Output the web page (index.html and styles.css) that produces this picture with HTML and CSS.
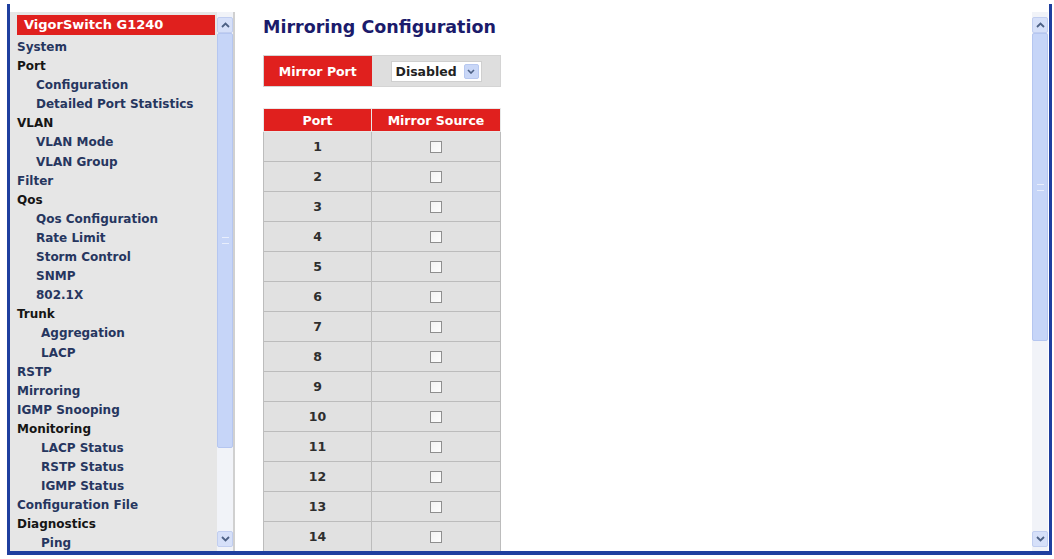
FILE: index.html
```html
<!DOCTYPE html>
<html lang="en">
<head>
    <meta charset="UTF-8">
    <title>Mirroring Configuration</title>
    <link rel="stylesheet" href="styles.css">
</head>
<body>
    <div class="window">
        <!-- left navigation frame -->
        <div class="menu-frame">
            <div class="menu">
                <div class="menu-title">VigorSwitch G1240</div>
                <ul class="menu-list">
                    <li class="link">System</li>
                    <li class="group">Port</li>
                    <li class="sub">Configuration</li>
                    <li class="sub">Detailed Port Statistics</li>
                    <li class="group">VLAN</li>
                    <li class="sub">VLAN Mode</li>
                    <li class="sub">VLAN Group</li>
                    <li class="link">Filter</li>
                    <li class="group">Qos</li>
                    <li class="sub">Qos Configuration</li>
                    <li class="sub">Rate Limit</li>
                    <li class="sub">Storm Control</li>
                    <li class="sub">SNMP</li>
                    <li class="sub">802.1X</li>
                    <li class="group">Trunk</li>
                    <li class="sub deep">Aggregation</li>
                    <li class="sub deep">LACP</li>
                    <li class="link">RSTP</li>
                    <li class="link">Mirroring</li>
                    <li class="link">IGMP Snooping</li>
                    <li class="group">Monitoring</li>
                    <li class="sub deep">LACP Status</li>
                    <li class="sub deep">RSTP Status</li>
                    <li class="sub deep">IGMP Status</li>
                    <li class="link">Configuration File</li>
                    <li class="group">Diagnostics</li>
                    <li class="sub deep">Ping</li>
                </ul>
            </div>
            <div class="scrollbar">
                <div class="arrow up"><svg width="9" height="6" viewBox="0 0 9 6"><path d="M1 5 L4.5 1.5 L8 5" fill="none" stroke="#4d6185" stroke-width="1.8"/></svg></div>
                <div class="thumb menu-thumb"><span class="grip"></span></div>
                <div class="track"></div>
                <div class="arrow down"><svg width="9" height="6" viewBox="0 0 9 6"><path d="M1 1 L4.5 4.5 L8 1" fill="none" stroke="#4d6185" stroke-width="1.8"/></svg></div>
            </div>
        </div>

        <!-- main page -->
        <div class="content">
            <h1>Mirroring Configuration</h1>

            <table class="mirror-port">
                <tr>
                    <th>Mirror Port</th>
                    <td>
                        <div class="select">
                            <span>Disabled</span>
                            <span class="select-btn"><svg width="8" height="5" viewBox="0 0 8 5"><path d="M1 1 L4 4 L7 1" fill="none" stroke="#4d6185" stroke-width="1.6"/></svg></span>
                        </div>
                    </td>
                </tr>
            </table>

            <table class="ports">
                <tr>
                    <th class="col-port">Port</th>
                    <th>Mirror Source</th>
                </tr>
                <tr><td>1</td><td><span class="checkbox"></span></td></tr>
                <tr><td>2</td><td><span class="checkbox"></span></td></tr>
                <tr><td>3</td><td><span class="checkbox"></span></td></tr>
                <tr><td>4</td><td><span class="checkbox"></span></td></tr>
                <tr><td>5</td><td><span class="checkbox"></span></td></tr>
                <tr><td>6</td><td><span class="checkbox"></span></td></tr>
                <tr><td>7</td><td><span class="checkbox"></span></td></tr>
                <tr><td>8</td><td><span class="checkbox"></span></td></tr>
                <tr><td>9</td><td><span class="checkbox"></span></td></tr>
                <tr><td>10</td><td><span class="checkbox"></span></td></tr>
                <tr><td>11</td><td><span class="checkbox"></span></td></tr>
                <tr><td>12</td><td><span class="checkbox"></span></td></tr>
                <tr><td>13</td><td><span class="checkbox"></span></td></tr>
                <tr><td>14</td><td><span class="checkbox"></span></td></tr>
            </table>
        </div>

        <div class="scrollbar main-scroll">
            <div class="arrow up"><svg width="9" height="6" viewBox="0 0 9 6"><path d="M1 5 L4.5 1.5 L8 5" fill="none" stroke="#4d6185" stroke-width="1.8"/></svg></div>
            <div class="thumb page-thumb"><span class="grip"></span></div>
            <div class="track"></div>
            <div class="arrow down"><svg width="9" height="6" viewBox="0 0 9 6"><path d="M1 1 L4.5 4.5 L8 1" fill="none" stroke="#4d6185" stroke-width="1.8"/></svg></div>
        </div>
    </div>
</body>
</html>
```

FILE: styles.css
```css
* {
    margin: 0;
    padding: 0;
    box-sizing: border-box;
}

body {
    background-color: #fff;
    font-family: "DejaVu Sans", Verdana, sans-serif;
    font-weight: bold;
    font-size: 12px;
}

.window {
    display: flex;
    margin: 4px 0 0 7px;
    width: 1045px;
    height: 551px;
    border-left: 3px solid #1f3f9f;
    border-right: 3px solid #1f3f9f;
    border-bottom: 4px solid #1f3f9f;
    overflow: hidden;
}

/* navigation frame */
.menu-frame {
    display: flex;
    width: 225px;
    margin-top: 8px;
    background-color: #e6e6e6;
    border-right: 2px solid #d0d0d0;
}

.menu {
    flex: 1;
    padding: 3px 2px 0 7px;
    overflow: hidden;
}

.menu-title {
    height: 20px;
    line-height: 20px;
    padding-left: 7px;
    background-color: #e0201e;
    color: #fff;
    font-size: 13px;
}

.menu-list {
    list-style: none;
    margin-top: 3px;
}

.menu-list li {
    height: 19.1px;
    line-height: 19.1px;
    white-space: nowrap;
    color: #26365f;
}

.menu-list .group {
    color: #151515;
}

.menu-list .sub {
    padding-left: 19px;
}

.menu-list .deep {
    padding-left: 24px;
}

/* scrollbars */
.scrollbar {
    display: flex;
    flex-direction: column;
    width: 16px;
    padding: 5px 0 4px;
    background-color: #f1f3f8;
}

.arrow {
    height: 16px;
    display: flex;
    align-items: center;
    justify-content: center;
    background-color: #d6e0f9;
    border: 1px solid #c1cef0;
    border-radius: 2px;
}

.thumb {
    display: flex;
    align-items: center;
    justify-content: center;
    background-color: #c6d5f8;
    border: 1px solid #b5c6f0;
    border-radius: 2px;
}

.grip {
    width: 7px;
    height: 7px;
    border-top: 1px solid #e8eefc;
    border-bottom: 1px solid #e8eefc;
}

.menu-thumb {
    height: 415px;
}

.page-thumb {
    height: 308px;
}

.track {
    flex: 1;
}

.main-scroll {
    margin: 8px 1px 0 0;
}

/* main page */
.content {
    flex: 1;
    padding: 12px 0 0 28px;
}

h1 {
    font-size: 17.5px;
    line-height: 22px;
    color: #1b1b6b;
    margin-bottom: 17px;
}

table {
    border-collapse: collapse;
    font-size: 12.5px;
}

.mirror-port {
    width: 238px;
    height: 32px;
    margin-bottom: 21px;
    border: 1px solid #d4d4d4;
}

.mirror-port th {
    width: 108px;
    background-color: #e0201e;
    color: #fff;
}

.mirror-port td {
    background-color: #dedede;
    padding-left: 19px;
}

.select {
    display: flex;
    align-items: center;
    justify-content: space-between;
    width: 91px;
    height: 21px;
    padding: 0 2px 0 4px;
    background-color: #fff;
    border: 1px solid #cfcfcf;
    color: #222;
    font-size: 12.5px;
}

.select-btn {
    display: flex;
    align-items: center;
    justify-content: center;
    width: 15px;
    height: 15px;
    background-color: #c9d7f7;
    border: 1px solid #b7c8f0;
    border-radius: 2px;
}

.ports {
    width: 238px;
}

.ports th {
    height: 23px;
    background-color: #e0201e;
    color: #fff;
    border: 1px solid #e8e8e8;
}

.ports .col-port {
    width: 108px;
}

.ports td {
    height: 30px;
    text-align: center;
    background-color: #e1e1e1;
    border: 1px solid #bcbcbc;
    color: #2e2e2e;
}

.checkbox {
    display: inline-block;
    width: 12px;
    height: 12px;
    margin-top: 3px;
    background: linear-gradient(135deg, #f2f2f2, #fdfdfd);
    border: 1px solid #8f8f8f;
}
```
